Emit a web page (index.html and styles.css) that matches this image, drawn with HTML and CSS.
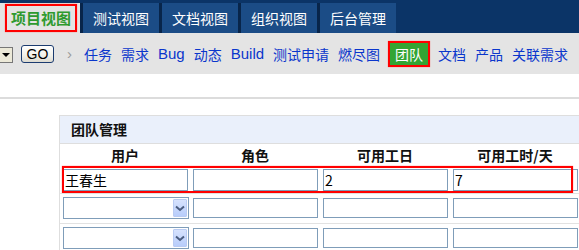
FILE: index.html
```html
<!DOCTYPE html>
<html lang="zh">
<head>
<meta charset="utf-8">
<title>团队管理</title>
<link rel="stylesheet" href="styles.css">
</head>
<body>
<div class="topbar">
  <div class="tab tab-active"><span class="hl">项目视图</span></div>
  <div class="tab">测试视图</div>
  <div class="tab">文档视图</div>
  <div class="tab">组织视图</div>
  <div class="tab">后台管理</div>
</div>
<div class="navbar">
  <div class="sel-tail"><span class="tri"></span></div>
  <button class="go">GO</button>
  <span class="sep">›</span>
  <nav class="links">
    <a>任务</a><a>需求</a><a class="lat">Bug</a><a>动态</a><a class="lat">Build</a><a>测试申请</a><a>燃尽图</a><a class="cur">团队</a><a>文档</a><a>产品</a><a>关联需求</a>
  </nav>
</div>
<div class="rule"></div>
<div class="panel">
  <div class="panel-head">团队管理</div>
  <div class="grid head">
    <div>用户</div><div>角色</div><div>可用工日</div><div>可用工时/天</div>
  </div>
  <div class="grid row row1">
    <div class="cell"><input class="inp tall" value="王春生"></div>
    <div class="cell"><input class="inp tall" value=""></div>
    <div class="cell"><input class="inp tall" value="2"></div>
    <div class="cell"><input class="inp tall" value="7"></div>
    <div class="mark"></div>
  </div>
  <div class="grid row">
    <div class="cell"><div class="select"><span class="dd"><svg width="10" height="7" viewBox="0 0 10 7"><path d="M1 1.5 L5 5 L9 1.5" fill="none" stroke="#4a5d80" stroke-width="2"/></svg></span></div></div>
    <div class="cell"><input class="inp" value=""></div>
    <div class="cell"><input class="inp" value=""></div>
    <div class="cell"><input class="inp" value=""></div>
  </div>
  <div class="grid row">
    <div class="cell"><div class="select"><span class="dd"><svg width="10" height="7" viewBox="0 0 10 7"><path d="M1 1.5 L5 5 L9 1.5" fill="none" stroke="#4a5d80" stroke-width="2"/></svg></span></div></div>
    <div class="cell"><input class="inp" value=""></div>
    <div class="cell"><input class="inp" value=""></div>
    <div class="cell"><input class="inp" value=""></div>
  </div>
</div>
</body>
</html>
```
FILE: styles.css
```css
html, body {
  margin: 0;
  padding: 0;
  overflow: hidden;
  background: #fff;
}
body {
  font-family: "Noto Sans CJK SC", "Liberation Sans", sans-serif;
  font-size: 14px;
  color: #000;
  width: 579px;
  height: 250px;
}
.topbar {
  height: 33px;
  box-sizing: border-box;
  padding-top: 3px;
  background: #0b3467;
  display: flex;
  align-items: stretch;
}
.tab {
  width: 76px;
  border-left: 3px solid #08254a;
  background: #1b4c86;
  color: #fff;
  font-size: 14px;
  display: flex;
  align-items: center;
  justify-content: center;
  line-height: 1;
}
.tab-active {
  width: 80px;
  border-left: 0;
  background: #e4e4e4;
  box-sizing: border-box;
  padding: 1px 3px 0 5px;
  justify-content: flex-start;
  align-items: flex-start;
}
.hl {
  display: block;
  border: 2px solid #f00;
  box-shadow: 0 0 1px #f66;
  height: 24px;
  line-height: 24px;
  padding: 0 4px;
  color: #2e9a2e;
  font-weight: bold;
  font-size: 15px;
}
.navbar {
  height: 41px;
  background: #e4e4e4;
  display: flex;
  align-items: center;
}
.sel-tail {
  width: 12px;
  height: 14px;
  margin-top: 3px;
  background: #ece9d8;
  border: 1px solid #777;
  border-left: 0;
  display: flex;
  align-items: center;
  justify-content: center;
}
.tri {
  width: 0;
  height: 0;
  border-left: 4px solid transparent;
  border-right: 4px solid transparent;
  border-top: 4px solid #000;
}
.go {
  margin-left: 8px;
  width: 33px;
  height: 18px;
  padding: 0;
  border: 1px solid #1c3c70;
  border-radius: 3px;
  background: linear-gradient(#fff, #f2f1ea 60%, #dcdad0);
  font-family: "Liberation Sans", sans-serif;
  font-size: 14px;
  line-height: 16px;
  color: #000;
}
.sep {
  margin-left: 13px;
  color: #9a9a9a;
  font-size: 15px;
  font-family: "Liberation Sans", sans-serif;
}
.links {
  margin-left: 12px;
  display: flex;
  align-items: center;
  gap: 9px;
}
.links a {
  color: #0a36cc;
  font-size: 14px;
  line-height: 1;
  cursor: pointer;
}
.links a.lat {
  font-family: "Liberation Sans", sans-serif;
  font-size: 15px;
}
.links a.cur {
  background: #33a533;
  color: #fff;
  border: 2px solid #f00;
  box-shadow: 0 0 1px #f66;
  padding: 4px 5px;
  height: 26px;
  box-sizing: border-box;
  margin: 0 -1px;
}
.rule {
  height: 23px;
  border-bottom: 2px solid #dcdcdc;
}
.panel {
  margin: 16px 0 0 59px;
  width: 540px;
  border: 1px solid #dedede;
  border-right: 0;
}
.panel-head {
  height: 27px;
  line-height: 27px;
  background: #eaf0fb;
  border-bottom: 1px solid #dedede;
  padding-left: 11px;
  font-weight: bold;
  font-size: 14px;
  color: #111;
}
.grid {
  display: grid;
  grid-template-columns: 130px 130px 130px 130px;
}
.head {
  height: 22px;
  line-height: 22px;
  font-weight: bold;
  text-align: center;
  color: #111;
}
.row {
  position: relative;
  border-top: 1px solid #e2e2e2;
  padding: 3px 0 4px;
  align-items: center;
}
.row1 {
  border-top: 0;
  padding: 3px 0 2px;
}
.cell {
  padding-left: 3px;
  display: flex;
  align-items: center;
}
.inp {
  box-sizing: border-box;
  width: 125px;
  height: 20px;
  margin: 0;
  border: 1px solid #7f9db9;
  padding: 0 1px;
  font-family: "Noto Sans CJK SC", "Liberation Sans", sans-serif;
  font-size: 14px;
  color: #000;
  background: #fff;
  outline: none;
}
.inp.tall {
  height: 22px;
}
.select {
  box-sizing: border-box;
  width: 126px;
  height: 22px;
  border: 1px solid #7f9db9;
  background: #fff;
  display: flex;
  justify-content: flex-end;
  align-items: center;
  padding-right: 1px;
}
.dd {
  width: 14px;
  height: 18px;
  box-sizing: border-box;
  border: 1px solid #b9cbf3;
  border-radius: 1px;
  background: linear-gradient(#d6e2fd, #b8cdfb);
  display: flex;
  align-items: center;
  justify-content: center;
}
.mark {
  position: absolute;
  left: 2px;
  top: 0;
  width: 511px;
  height: 27px;
  box-sizing: border-box;
  border: 2px solid #f00;
  box-shadow: 0 0 1px #f66;
  pointer-events: none;
}
```
